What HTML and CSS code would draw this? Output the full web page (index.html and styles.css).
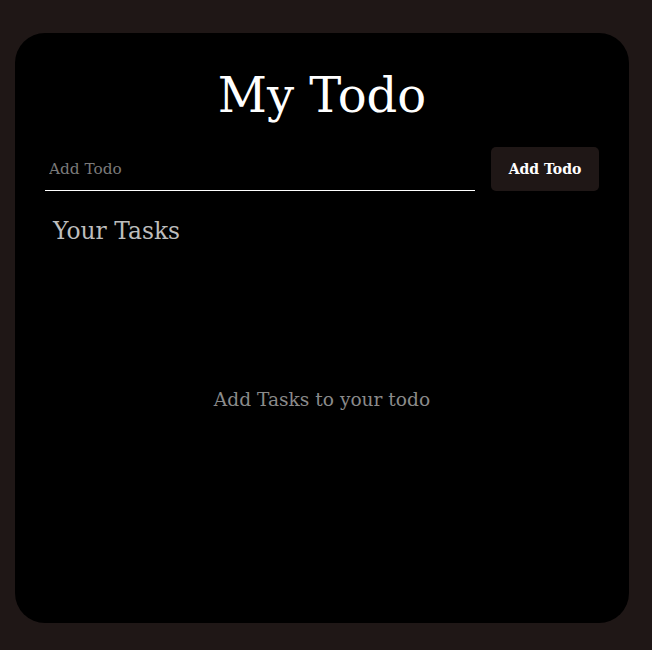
FILE: index.html
```html
<!DOCTYPE html>
<html>
<head>
<meta charset="utf-8">
<link rel="stylesheet" href="styles.css">
</head>
<body>
<main class="card">
  <h1 class="title">My Todo</h1>
  <div class="form-row">
    <input class="todo-input" type="text" placeholder="Add Todo">
    <button class="add-btn">Add Todo</button>
  </div>
  <h2 class="tasks-heading">Your Tasks</h2>
  <div class="empty">Add Tasks to your todo</div>
</main>
</body>
</html>
```
FILE: styles.css
```css
html, body {
  margin: 0;
  padding: 0;
  background: #1f1716;
  font-family: "DejaVu Serif", serif;
}
body {
  padding: 33px 23px 27px 15px;
}
.card {
  box-sizing: border-box;
  width: 614px;
  height: 590px;
  background: #000;
  border-radius: 30px;
  padding: 30px 30px 0 30px;
  display: flex;
  flex-direction: column;
}
.title {
  margin: 0;
  text-align: center;
  color: #fff;
  font-weight: 400;
  font-size: 48px;
  line-height: 64px;
}
.form-row {
  display: flex;
  align-items: center;
  gap: 16px;
  margin-top: 20px;
}
.todo-input {
  flex: 0 0 430px;
  height: 44px;
  box-sizing: border-box;
  background: transparent;
  border: none;
  border-bottom: 1px solid #fff;
  outline: none;
  color: #fff;
  font-family: inherit;
  font-size: 15.3px;
  padding: 0 4px;
}
.todo-input::placeholder {
  color: #7a7a7a;
}
.add-btn {
  width: 108px;
  height: 44px;
  background: #1f1716;
  border: none;
  border-radius: 5px;
  color: #fff;
  font-family: inherit;
  font-weight: 700;
  font-size: 14px;
}
.tasks-heading {
  margin: 22px 0 0 8px;
  color: #bdbdbd;
  font-weight: 400;
  font-size: 23.4px;
  line-height: 36px;
}
.empty {
  flex: 1;
  display: flex;
  justify-content: center;
  padding-top: 140px;
  color: #8a8a8a;
  font-size: 18.6px;
}
```
